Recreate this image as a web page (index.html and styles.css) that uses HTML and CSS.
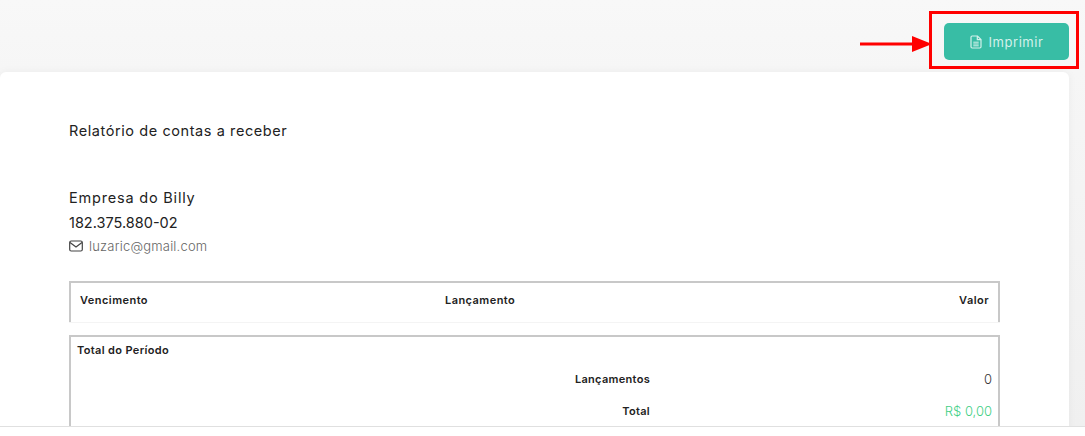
FILE: index.html
```html
<!DOCTYPE html>
<html lang="pt-BR">
<head>
    <meta charset="UTF-8">
    <meta name="viewport" content="width=device-width, initial-scale=1.0">
    <title>Relatório de contas a receber</title>
    <link rel="stylesheet" href="styles.css">
</head>
<body>
<div class="page">
    <div class="top-bar">
        <button class="print-btn" type="button">
            <svg class="print-icon" viewBox="0 0 12 14" width="12" height="14" fill="none" stroke="currentColor" stroke-width="1.2">
                <path d="M1 2.2C1 1.5 1.5 1 2.2 1H7.5L11 4.5V11.8C11 12.5 10.500 13 9.800 13H2.200C1.500 13 1 12.500 1 11.800Z"/>
                <path d="M7.300 1V4.700H11"/>
                <path d="M3.300 7.200H8.700M3.300 9H8.700M3.300 10.800H8.700" stroke-width="1"/>
            </svg>
            Imprimir
        </button>
    </div>

    <div class="report-card">
        <h1 class="report-title">Relatório de contas a receber</h1>

        <div class="company">
            <div class="company-name">Empresa do Billy</div>
            <div class="company-doc">182.375.880-02</div>
            <div class="company-mail">
                <svg viewBox="0 0 14 12" width="14" height="12" fill="none" stroke="#444" stroke-width="1.200">
                    <rect x="0.700" y="1" width="12.600" height="10" rx="1.500"/>
                    <path d="M1 2.500L7 7L13 2.500"/>
                </svg>
                luzaric@gmail.com
            </div>
        </div>

        <div class="list-head">
            <span class="col-due">Vencimento</span>
            <span class="col-entry">Lançamento</span>
            <span class="col-value">Valor</span>
        </div>

        <div class="totals">
            <div class="totals-title">Total do Período</div>
            <div class="totals-row">
                <span class="totals-label">Lançamentos</span>
                <span class="totals-value">0</span>
            </div>
            <div class="totals-row">
                <span class="totals-label">Total</span>
                <span class="totals-value money">R$ 0,00</span>
            </div>
        </div>
    </div>
</div>
<div class="bottom-strip"></div>

<div class="mark-box"></div>
<svg class="mark-arrow" viewBox="0 0 72 16" width="72" height="16">
    <rect x="0" y="6.500" width="54" height="3" fill="#f00"/>
    <path d="M52 0L72 8L52 16Z" fill="#f00"/>
</svg>
</body>
</html>
```

FILE: styles.css
```css
html, body {
    height: 100%;
}
body {
    font-family: Inter, "Liberation Sans", sans-serif;
    background: #fff;
    color: #222;
    margin: 0;
    overflow: hidden;
}
.page {
    height: 426px;
    overflow: hidden;
    background: linear-gradient(to bottom, #f8f8f8, #f6f6f6 70px, #f0f0f0);
}
.top-bar {
    height: 72px;
    display: flex;
    justify-content: flex-end;
    align-items: flex-start;
    padding: 23px 16px 0 0;
    box-sizing: border-box;
}
.print-btn {
    width: 125px;
    height: 37px;
    display: flex;
    justify-content: center;
    align-items: center;
    gap: 7px;
    border: none;
    border-radius: 5px;
    background-color: #38bda5;
    color: #d4f1eb;
    font-family: inherit;
    font-size: 13px;
    letter-spacing: 0.55px;
}
.report-card {
    width: 1069px;
    height: 380px;
    padding: 50px 69px 0;
    box-sizing: border-box;
    background: #fff;
    border-radius: 6px;
    box-shadow: 0 0 8px rgba(0, 0, 0, 0.05);
}
.report-title {
    margin: 0;
    font-size: 14.500px;
    font-weight: 400;
    line-height: 18px;
    letter-spacing: 0.58px;
}
.company {
    margin-top: 49px;
}
.company-name {
    font-size: 14.500px;
    line-height: 18px;
    letter-spacing: 0.8px;
}
.company-doc {
    margin-top: 7px;
    font-size: 14.500px;
    line-height: 18px;
}
.company-mail {
    margin-top: 5px;
    display: flex;
    align-items: center;
    gap: 6px;
    font-size: 13px;
    line-height: 18px;
    font-weight: 300;
    color: #666;
    letter-spacing: 0.2px;
}
.list-head {
    width: 931px;
    height: 41px;
    margin-top: 26px;
    box-sizing: border-box;
    padding: 0 9px;
    display: flex;
    align-items: flex-start;
    border: 2px solid #c8c8c8;
    border-bottom: none;
    box-shadow: 0 1px 0 #f4f4f4;
    font-size: 11px;
    font-weight: 600;
    line-height: 34px;
    letter-spacing: 0.45px;
}
.col-due {
    width: 365px;
}
.col-entry {
    flex: 1;
}
.totals {
    width: 931px;
    height: 120px;
    margin-top: 13px;
    box-sizing: border-box;
    padding: 6px 6px 0 6px;
    border: 2px solid #c8c8c8;
}
.totals-title {
    margin-bottom: 5px;
    font-size: 11px;
    font-weight: 600;
    line-height: 15px;
    letter-spacing: 0.35px;
}
.totals-row {
    display: flex;
    align-items: center;
    height: 32px;
    font-size: 11px;
    font-weight: 600;
    letter-spacing: 0.3px;
}
.totals-label {
    width: 573px;
    text-align: right;
}
.totals-value {
    flex: 1;
    text-align: right;
    font-size: 13px;
    font-weight: 300;
    letter-spacing: 0;
    color: #333;
}
.totals-value.money {
    color: #3fcf85;
}
.bottom-strip {
    height: 10px;
    box-sizing: border-box;
    border-top: 1px solid #e0e0e0;
    background: #fff;
}
.mark-box {
    position: absolute;
    left: 929px;
    top: 11px;
    width: 150px;
    height: 58px;
    box-sizing: border-box;
    border: 3px solid #f00;
}
.mark-arrow {
    position: absolute;
    left: 860px;
    top: 36px;
}
```
